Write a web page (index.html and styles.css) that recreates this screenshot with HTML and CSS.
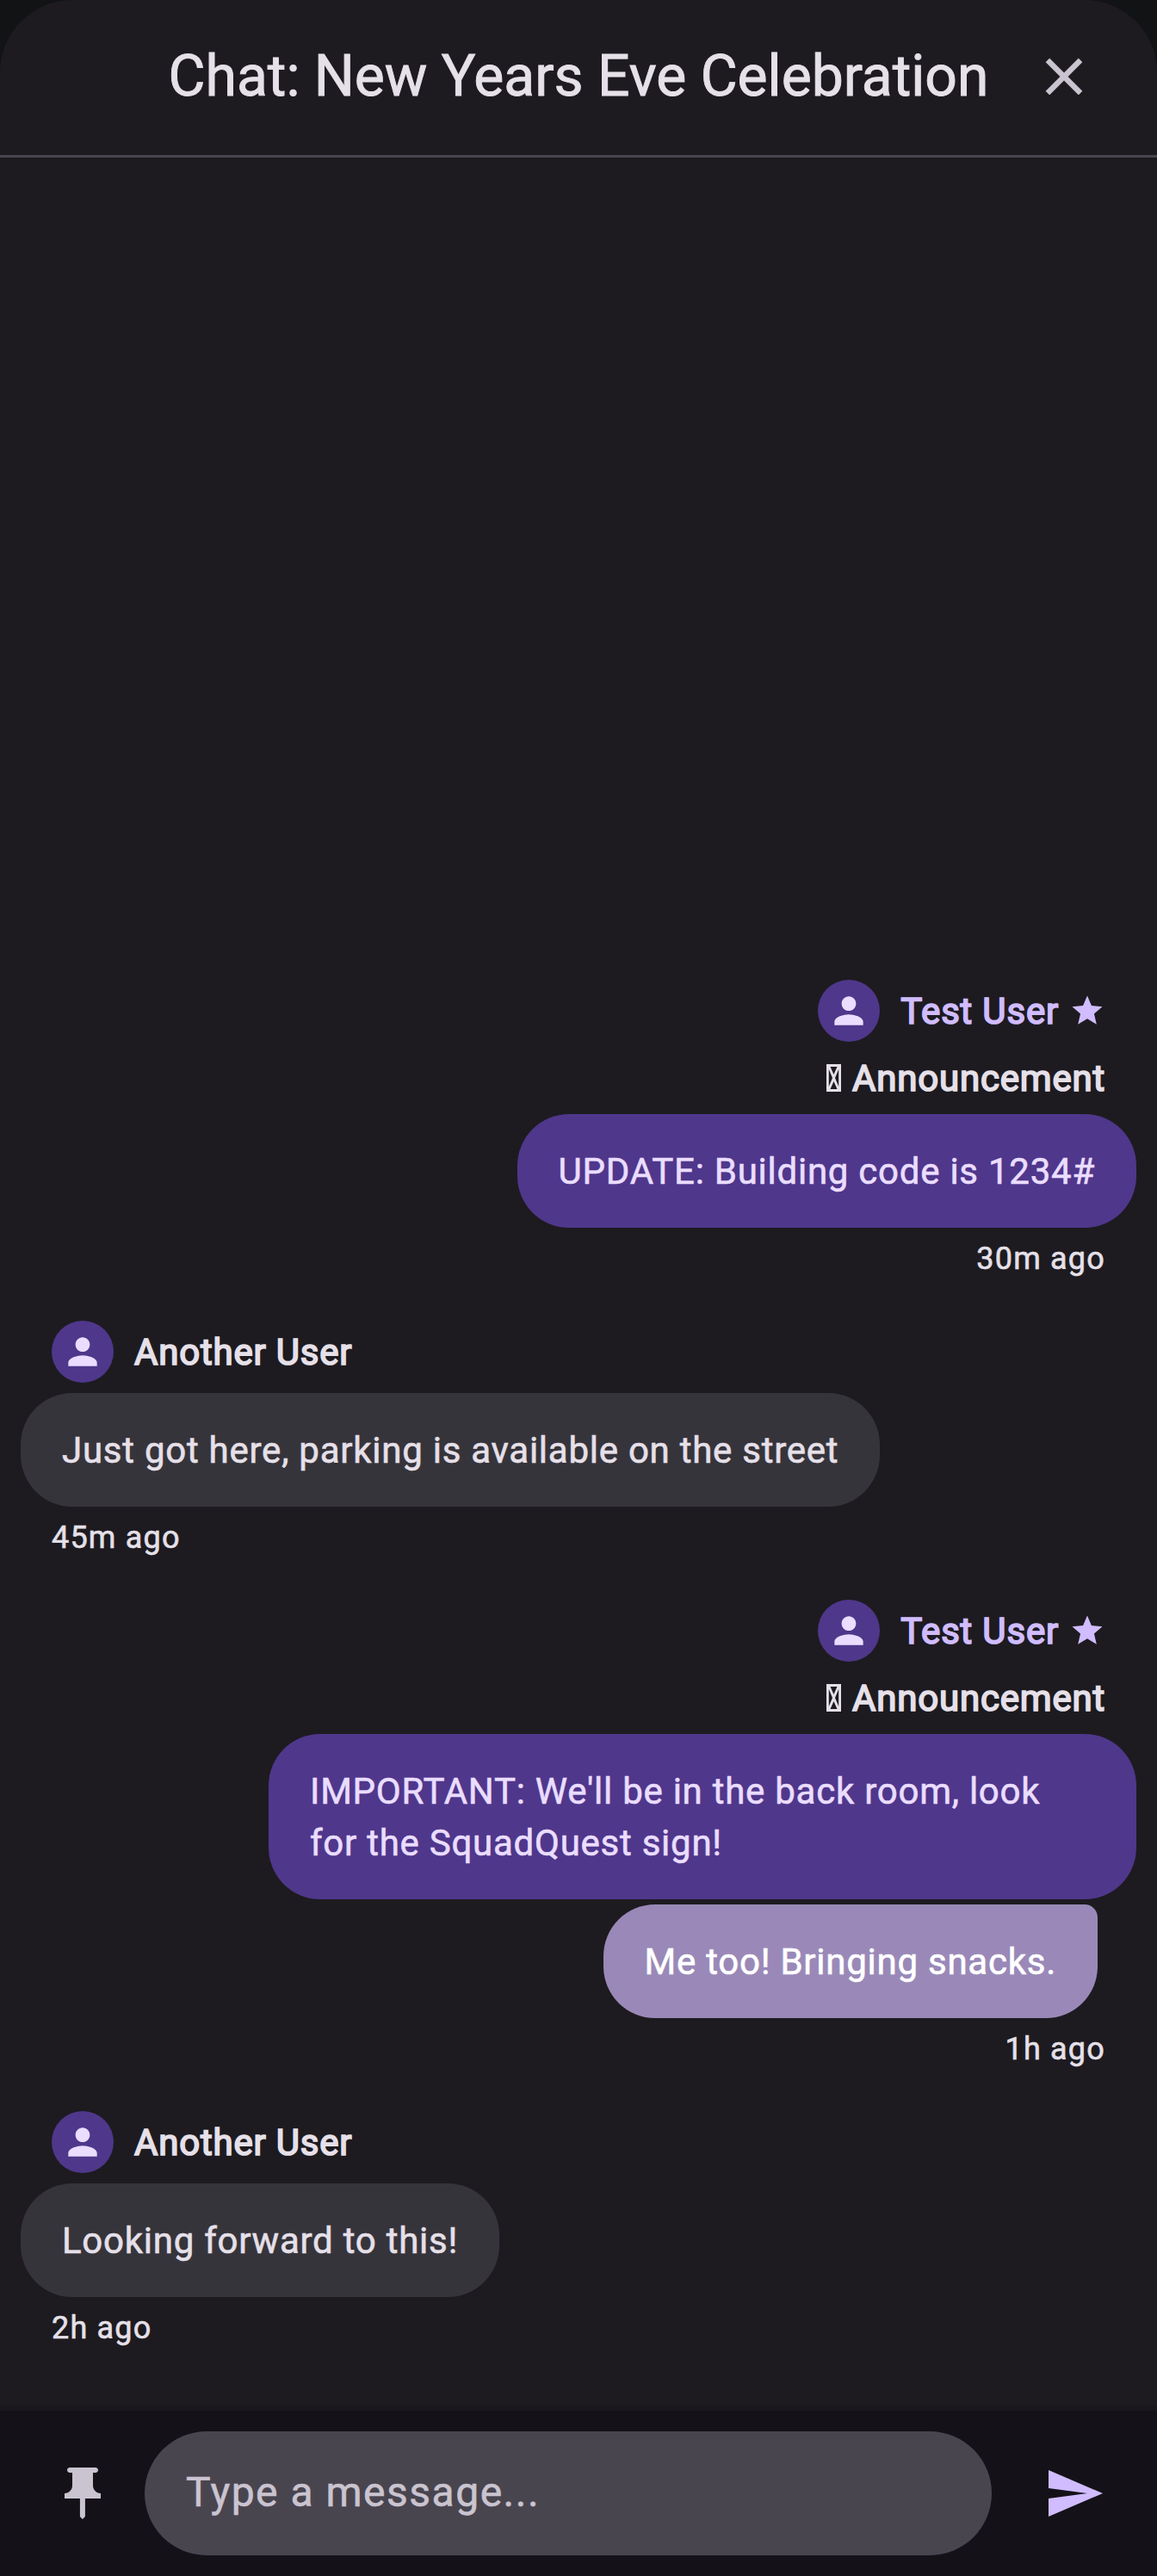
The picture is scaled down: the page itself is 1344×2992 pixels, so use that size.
FILE: index.html
```html
<!DOCTYPE html>
<html lang="en">
<head>
<meta charset="utf-8">
<title>Chat: New Years Eve Celebration</title>
<link rel="stylesheet" href="styles.css">
</head>
<body>
<svg class="defs" width="0" height="0" aria-hidden="true">
  <symbol id="person" viewBox="0 0 24 24"><path d="M12 12c2.21 0 4-1.79 4-4s-1.79-4-4-4-4 1.79-4 4 1.79 4 4 4zm0 2c-2.67 0-8 1.34-8 4v2h16v-2c0-2.66-5.33-4-8-4z"/></symbol>
  <symbol id="star" viewBox="0 0 24 24"><path d="M12 17.27L18.18 21l-1.64-7.03L22 9.24l-7.19-.61L12 2 9.19 8.63 2 9.24l5.46 4.73L5.82 21z"/></symbol>
  <symbol id="tofu" viewBox="0 0 17 32"><path fill-rule="evenodd" d="M0 0H17V32H0ZM4.500 3 8.500 12 12.500 3ZM2.800 6V26L7 16ZM14.200 6V26L10 16ZM4.500 29 8.500 20 12.500 29Z"/></symbol>
</svg>
<div class="sheet">
  <header class="header">
    <h1 class="title">Chat: New Years Eve Celebration</h1>
    <svg class="icon close" viewBox="0 0 24 24"><path d="M19 6.41L17.59 5 12 10.59 6.41 5 5 6.41 10.59 12 5 17.59 6.41 19 12 13.410 17.590 19 19 17.590 13.410 12z"/></svg>
  </header>
  <main class="messages">
    <article class="message own">
      <div class="author"><span class="avatar"><svg><use href="#person"/></svg></span><span class="name">Test User</span><svg class="star"><use href="#star"/></svg></div>
      <div class="label"><svg class="tofu"><use href="#tofu"/></svg>Announcement</div>
      <div class="bubble">UPDATE: Building code is 1234#</div>
      <time class="time">30m ago</time>
    </article>
    <article class="message">
      <div class="author"><span class="avatar"><svg><use href="#person"/></svg></span><span class="name">Another User</span></div>
      <div class="bubble">Just got here, parking is available on the street</div>
      <time class="time">45m ago</time>
    </article>
    <article class="message own">
      <div class="author"><span class="avatar"><svg><use href="#person"/></svg></span><span class="name">Test User</span><svg class="star"><use href="#star"/></svg></div>
      <div class="label"><svg class="tofu"><use href="#tofu"/></svg>Announcement</div>
      <div class="bubble">IMPORTANT: We'll be in the back room, look for the SquadQuest sign!</div>
      <div class="bubble reply">Me too! Bringing snacks.</div>
      <time class="time">1h ago</time>
    </article>
    <article class="message">
      <div class="author"><span class="avatar"><svg><use href="#person"/></svg></span><span class="name">Another User</span></div>
      <div class="bubble">Looking forward to this!</div>
      <time class="time">2h ago</time>
    </article>
  </main>
  <footer class="composer">
    <span class="button pin"><svg class="icon" viewBox="0 0 24 24"><path d="M16 9V4h1c.55 0 1-.45 1-1s-.45-1-1-1H7c-.55 0-1 .45-1 1s.45 1 1 1h1v5c0 1.660-1.340 3-3 3v2h5.970v7l1 1 1-1v-7H19v-2c-1.660 0-3-1.340-3-3z"/></svg></span>
    <div class="field">Type a message...</div>
    <span class="button send"><svg class="icon" viewBox="0 0 24 24"><path d="M2.010 21L23 12 2.010 3 2 10l15 2-15 2z"/></svg></span>
  </footer>
</div>
</body>
</html>
```

FILE: styles.css
```css
* { box-sizing: border-box; }
body { margin: 0; background: #121315; font-family: Roboto, sans-serif; color: #e6e0e9; -webkit-text-stroke: .6px; }
svg { display: block; fill: currentColor; flex: none; }
.defs { position: absolute; }
.sheet { display: flex; flex-direction: column; height: 2992px; background: #1d1b20; border-radius: 84px 84px 0 0; overflow: hidden; }
.header { display: flex; align-items: center; height: 183px; padding: 0 72px 2px 144px; border-bottom: 3px solid #49454f; }
.title { flex: 1; margin: 0; font-size: 66px; line-height: 84px; font-weight: 400; text-align: center; white-space: nowrap; -webkit-text-stroke: .9px; }
.icon { width: 72px; height: 72px; }
.close { color: #cac4d0; stroke: currentColor; stroke-width: .25px; }
.messages { flex: 1; display: flex; flex-direction: column; justify-content: flex-end; gap: 48px; padding: 0 24px 66px; }
.message { display: flex; flex-direction: column; align-items: flex-start; }
.own { align-items: flex-end; }
.author { display: flex; align-items: center; height: 72px; margin: 0 36px 12px; }
.avatar { display: flex; align-items: center; justify-content: center; width: 72px; height: 72px; margin-right: 24px; border-radius: 50%; background: #4f378b; color: #eaddff; }
.avatar svg { width: 50px; height: 50px; }
.name, .label { font-size: 42px; line-height: 60px; font-weight: 400; letter-spacing: .8px; white-space: nowrap; -webkit-text-stroke: 1.7px; }
.name { padding-top: 2px; }
.own .name { color: #d0bcff; }
.star { width: 42px; height: 42px; margin-left: 12px; color: #d0bcff; }
.label { display: flex; height: 60px; margin: 0 36px 12px; padding-top: 1px; }
.tofu { width: 17px; height: 32px; margin: 13px 13px 0 0; }
.bubble { max-width: 1008px; padding: 37px 48px 35px; border-radius: 60px; background: #36343b; font-size: 42px; line-height: 60px; letter-spacing: .75px; }
.own .bubble { background: #4f378b; color: #eaddff; }
.own .reply { margin: 6px 45px 0 0; background: #9a89b8; color: #fff; border-top-right-radius: 15px; }
.time { margin: 12px 36px 0; font-size: 36px; line-height: 48px; letter-spacing: 1.2px; }
.composer { display: flex; align-items: center; height: 198px; padding: 0 24px; border-top: 6px solid #1a181c; background: #141218; }
.button { display: flex; align-items: center; justify-content: center; width: 144px; height: 144px; }
.pin { color: #cac4d0; }
.send { color: #d0bcff; }
.field { flex: 1; height: 144px; margin-right: 24px; padding: 0 48px; border-radius: 72px; background: #49454f; color: #cac4d0; font-size: 48px; line-height: 142px; letter-spacing: 1.5px; }
```
